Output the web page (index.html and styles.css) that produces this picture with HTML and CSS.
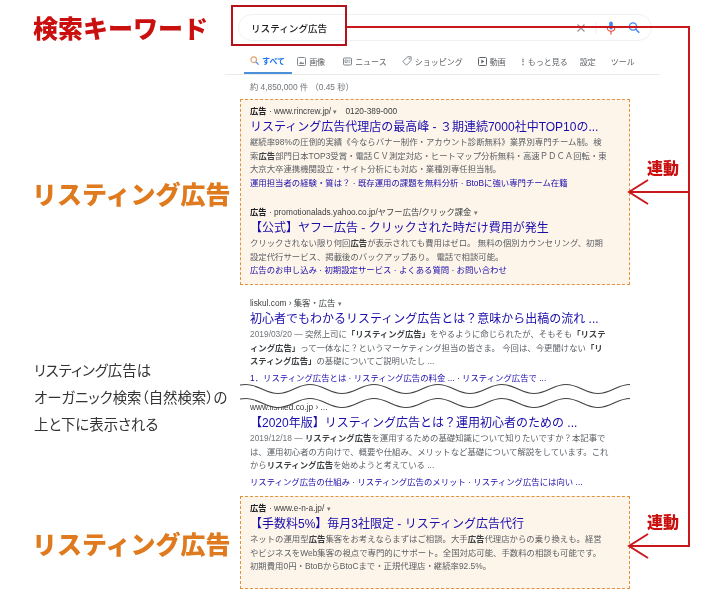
FILE: index.html
```html
<!DOCTYPE html>
<html lang="ja">
<head>
    <meta charset="UTF-8">
    <meta name="viewport" content="width=device-width, initial-scale=1.0">
    <title>リスティング広告</title>
    <link rel="stylesheet" href="styles.css">
</head>
<body>
    <div class="page">
        <!-- Left column: labels -->
        <aside class="labels">
            <div class="label label-keyword">検索キーワード</div>
            <div class="label label-ad label-ad-first">リスティング広告</div>
            <p class="note">リスティング広告は<br>オーガニック検索（自然検索）の<br>上と下に表示される</p>
            <div class="label label-ad label-ad-last">リスティング広告</div>
        </aside>

        <!-- Right column: search result page -->
        <main class="serp">
            <div class="search">
                <span class="search-text">リスティング広告</span>
                <svg class="search-icons" width="74" height="16" viewBox="0 0 74 16">
                    <path d="M1.500 4.500l7 7M8.500 4.500l-7 7" stroke="#9a8f8f" stroke-width="1.100" fill="none"/>
                    <path d="M20 2v12" stroke="#eceef0" stroke-width="1"/>
                    <rect x="33.200" y="1.500" width="3.600" height="8" rx="1.800" fill="#4285f4"/>
                    <path d="M31.200 7.500c0 5 7.600 5 7.600 0M35 11.500v3" stroke="#ea4335" stroke-width="1.100" fill="none"/>
                    <circle cx="57" cy="6.500" r="3.600" stroke="#4285f4" stroke-width="1.400" fill="none"/>
                    <path d="M59.700 9.200l3.600 3.600" stroke="#4285f4" stroke-width="1.500"/>
                </svg>
            </div>

            <nav class="tabs">
                <span class="tab tab-active">
                    <svg width="9" height="9" viewBox="0 0 9 9"><circle cx="3.700" cy="3.700" r="2.800" stroke="#e2a06a" stroke-width="1.100" fill="none"/><path d="M5.800 5.800l2.800 2.800" stroke="#4285f4" stroke-width="1.200"/></svg>
                    すべて
                </span>
                <span class="tab">
                    <svg width="9" height="9" viewBox="0 0 9 9"><rect x=".5" y=".5" width="8" height="8" rx="1" stroke="#80868b" fill="none"/><path d="M2 7l1.800-2.400 1.300 1.500 1-1L7.200 7z" fill="#80868b"/></svg>
                    画像
                </span>
                <span class="tab tab-news">
                    <svg width="9" height="9" viewBox="0 0 9 9"><rect x=".5" y="1" width="8" height="7" rx="1" stroke="#80868b" fill="none"/><path d="M2 3h2.200v2.500H2zM5.300 3.300h2M5.300 5.200h2" stroke="#80868b" stroke-width=".8" fill="none"/></svg>
                    ニュース
                </span>
                <span class="tab">
                    <svg width="10" height="10" viewBox="0 0 10 10"><path d="M5.500.8h3.600v3.600L4.500 9.200.8 5.500z" stroke="#80868b" fill="none"/><circle cx="7.300" cy="2.700" r=".7" fill="#80868b"/></svg>
                    ショッピング
                </span>
                <span class="tab">
                    <svg width="9" height="9" viewBox="0 0 9 9"><rect x=".5" y=".5" width="8" height="8" rx="1" stroke="#5f6368" fill="none"/><path d="M3.300 2.500l3 2-3 2z" fill="#5f6368"/></svg>
                    動画
                </span>
                <span class="tab tab-more"><span class="dots">⋮</span>もっと見る</span>
                <span class="tab">設定</span>
                <span class="tab">ツール</span>
            </nav>

            <div class="count">約 4,850,000 件 （0.45 秒）</div>

            <section class="ad-box ad-box-top">
                <div class="res-url"><b>広告</b> · www.rincrew.jp/ <i class="caret">▾</i><span class="phone">0120-389-000</span></div>
                <div class="res-title">リスティング広告代理店の最高峰 - ３期連続7000社中TOP10の...</div>
                <div class="res-desc">継続率98%の圧倒的実績《今ならバナー制作・アカウント診断無料》業界別専門チーム制。検</div>
                <div class="res-desc">索<b>広告</b>部門日本TOP3受賞・電話ＣＶ測定対応・ヒートマップ分析無料・高速ＰＤＣＡ回転・東</div>
                <div class="res-desc">大京大卒連携機関設立・サイト分析にも対応・業種別専任担当制。</div>
                <div class="res-links">運用担当者の経験・質は？ · 既存運用の課題を無料分析 · BtoBに強い専門チーム在籍</div>

                <div class="res-url res-url-next"><b>広告</b> · promotionalads.yahoo.co.jp/ヤフー広告/クリック課金 <i class="caret">▾</i></div>
                <div class="res-title">【公式】ヤフー広告 - クリックされた時だけ費用が発生</div>
                <div class="res-desc">クリックされない限り何回<b>広告</b>が表示されても費用はゼロ。 無料の個別カウンセリング、初期</div>
                <div class="res-desc">設定代行サービス、掲載後のバックアップあり。 電話で相談可能。</div>
                <div class="res-links">広告のお申し込み · 初期設定サービス · よくある質問 · お問い合わせ</div>
            </section>

            <section class="organic">
                <div class="res-url">liskul.com › 集客・広告 <i class="caret">▾</i></div>
                <div class="res-title">初心者でもわかるリスティング広告とは？意味から出稿の流れ ...</div>
                <div class="res-desc"><span class="date">2019/03/20 —</span> 突然上司に<b>「リスティング広告」</b>をやるように命じられたが、そもそも<b>「リステ</b></div>
                <div class="res-desc"><b>ィング広告」</b>って一体なに？というマーケティング担当の皆さま。 今回は、今更聞けない<b>「リ</b></div>
                <div class="res-desc"><b>スティング広告」</b>の基礎についてご説明いたし ...</div>
                <div class="res-links res-links-gap">1．リスティング広告とは · リスティング広告の料金 ... · リスティング広告で ...</div>

                <div class="res-url res-url-next">www.lisnied.co.jp › ...</div>
                <div class="res-title">【2020年版】リスティング広告とは？運用初心者のための ...</div>
                <div class="res-desc"><span class="date">2019/12/18 —</span> <b>リスティング広告</b>を運用するための基礎知識について知りたいですか？本記事で</div>
                <div class="res-desc">は、運用初心者の方向けで、概要や仕組み、メリットなど基礎について解説をしています。これ</div>
                <div class="res-desc">から<b>リスティング広告</b>を始めようと考えている ...</div>
                <div class="res-links res-links-gap">リスティング広告の仕組み · リスティング広告のメリット · リスティング広告には向い ...</div>
            </section>

            <section class="ad-box ad-box-bottom">
                <div class="res-url"><b>広告</b> · www.e-n-a.jp/ <i class="caret">▾</i></div>
                <div class="res-title">【手数料5%】毎月3社限定 - リスティング広告代行</div>
                <div class="res-desc">ネットの運用型<b>広告</b>集客をお考えならまずはご相談。大手<b>広告</b>代理店からの乗り換えも。経営</div>
                <div class="res-desc">やビジネスをWeb集客の視点で専門的にサポート。全国対応可能、手数料の相談も可能です。</div>
                <div class="res-desc">初期費用0円・BtoBからBtoCまで・正規代理店・継続率92.5%。</div>
            </section>
        </main>

        <!-- Overlay: highlight box, connector arrows, wave cut -->
        <div class="keyword-box"></div>
        <svg class="overlay" width="720" height="598" viewBox="0 0 720 598">
            <defs>
                <path id="wave" d="M240 385c2-.4 4-.5 6-.5c13 0 19 9 32 9s19-9 32-9 19 9 32 9 19-9 32-9 19 9 32 9 19-9 32-9 19 9 32 9 19-9 32-9 19 9 32 9 19-9 32-9 19 9 32 9 19-9 32-9"/>
            </defs>
            <use href="#wave" class="wave-cut" y="7"/>
            <use href="#wave" class="wave-line"/>
            <use href="#wave" class="wave-line" y="14"/>
            <g fill="none" stroke="#c9171e" stroke-width="2">
                <path d="M347 27H689V546H630"/>
                <path d="M689 192H630"/>
                <path d="M648 180l-19 12 19 12"/>
                <path d="M648 534l-19 12 19 12"/>
            </g>
        </svg>
        <div class="link-label link-label-top">連動</div>
        <div class="link-label link-label-bottom">連動</div>
    </div>
</body>
</html>
```

FILE: styles.css
```css
body {
    margin: 0;
    background-color: #fff;
    font-family: "Liberation Sans", "Noto Sans CJK JP", sans-serif;
    color: #4d5156;
}

.page {
    position: relative;
    display: flex;
    width: 720px;
    height: 598px;
    overflow: hidden;
    filter: blur(0.45px);
}

/* left column */
.labels {
    flex: none;
    width: 240px;
    padding-left: 32px;
    box-sizing: border-box;
    font-family: "Noto Sans CJK JP", sans-serif;
}

.label {
    font-size: 25px;
    line-height: 30px;
    font-weight: 900;
    white-space: nowrap;
}

.label-keyword {
    margin: 12px 0 0 1px;
    color: #c9100f;
}

.label-ad {
    color: #df7a1f;
}

.label-ad-first {
    margin-top: 136px;
}

.label-ad-last {
    margin-top: 91px;
}

.note {
    margin: 148px 0 0 2px;
    font-size: 14.400px;
    line-height: 27px;
    color: #333;
    font-weight: 400;
    font-feature-settings: "palt";
    white-space: nowrap;
}

/* search bar */
.serp {
    flex: none;
    width: 420px;
}

.search {
    display: flex;
    align-items: center;
    justify-content: space-between;
    box-sizing: border-box;
    width: 414px;
    height: 27px;
    margin: 14px 0 0 -2px;
    padding: 0 1px 0 12px;
    border: 1px solid #eff0f2;
    border-radius: 14px;
}

.search-text {
    font-family: "Noto Sans CJK JP", sans-serif;
    font-size: 9.600px;
    font-weight: 500;
    color: #202124;
}

/* tabs */
.tabs {
    display: flex;
    gap: 15px;
    height: 34px;
    align-items: center;
    box-sizing: border-box;
    margin-left: -15px;
    padding: 7px 0 0 25px;
    border-bottom: 1px solid #ebebeb;
    font-size: 8px;
    color: #5f6368;
    white-space: nowrap;
}

.tab {
    display: flex;
    align-items: center;
    gap: 3px;
}

.tab-active {
    align-self: stretch;
    margin: 0 -10px 0 -6px;
    padding: 0 7px 0 6px;
    border-bottom: 2px solid #4a8fd8;
    color: #1a73e8;
    font-weight: 700;
}

.tab-news {
    margin-left: 3px;
}

.tab-more {
    gap: 1px;
    margin-left: -2px;
    margin-right: -3px;
}

.dots {
    font-weight: 700;
}

.count {
    margin-left: 10px;
    height: 24px;
    line-height: 24px;
    font-size: 8.300px;
    color: #70757a;
}

/* results */
.ad-box {
    box-sizing: border-box;
    width: 390px;
    padding: 4px 9px 0;
    border: 1px dashed #e2913c;
    background-color: #fdf4ea;
}

.ad-box-top {
    height: 186px;
}

.ad-box-bottom {
    height: 93px;
    margin-top: 7px;
}

.organic {
    padding: 11px 9px 0 10px;
    width: 390px;
    box-sizing: border-box;
}

.res-url {
    height: 14px;
    line-height: 14px;
    font-size: 8.300px;
    color: #3c4043;
    white-space: nowrap;
}

.res-url b {
    color: #202124;
}

.res-url-next {
    margin-top: 15px;
}

.phone {
    margin-left: 8px;
}

.caret {
    font-style: normal;
    font-size: 7px;
    color: #70757a;
}

.res-title {
    height: 18px;
    line-height: 18px;
    font-size: 12px;
    color: #1a0dab;
    white-space: nowrap;
}

.res-desc {
    height: 13.500px;
    line-height: 13.500px;
    font-size: 8.400px;
    color: #5a5e63;
    white-space: nowrap;
}

.res-desc b {
    color: #3c4043;
}

.date {
    color: #70757a;
}

.res-links {
    height: 13.500px;
    line-height: 13.500px;
    font-size: 8.400px;
    color: #1a0dab;
    white-space: nowrap;
}

.res-links-gap {
    margin-top: 3px;
}

/* things on top of the page */
.keyword-box {
    position: absolute;
    left: 231px;
    top: 5px;
    width: 116px;
    height: 41px;
    box-sizing: border-box;
    border: 2px solid #b5121b;
}

.overlay {
    position: absolute;
    left: 0;
    top: 0;
}

.wave-cut {
    fill: none;
    stroke: #fff;
    stroke-width: 13.500px;
}

.wave-line {
    fill: none;
    stroke: #444;
    stroke-width: 1.200px;
}

.link-label {
    position: absolute;
    left: 647px;
    font-family: "Noto Sans CJK JP", sans-serif;
    font-size: 16px;
    line-height: 20px;
    font-weight: 900;
    color: #c9100f;
}

.link-label-top {
    top: 157px;
}

.link-label-bottom {
    top: 511px;
}
```
